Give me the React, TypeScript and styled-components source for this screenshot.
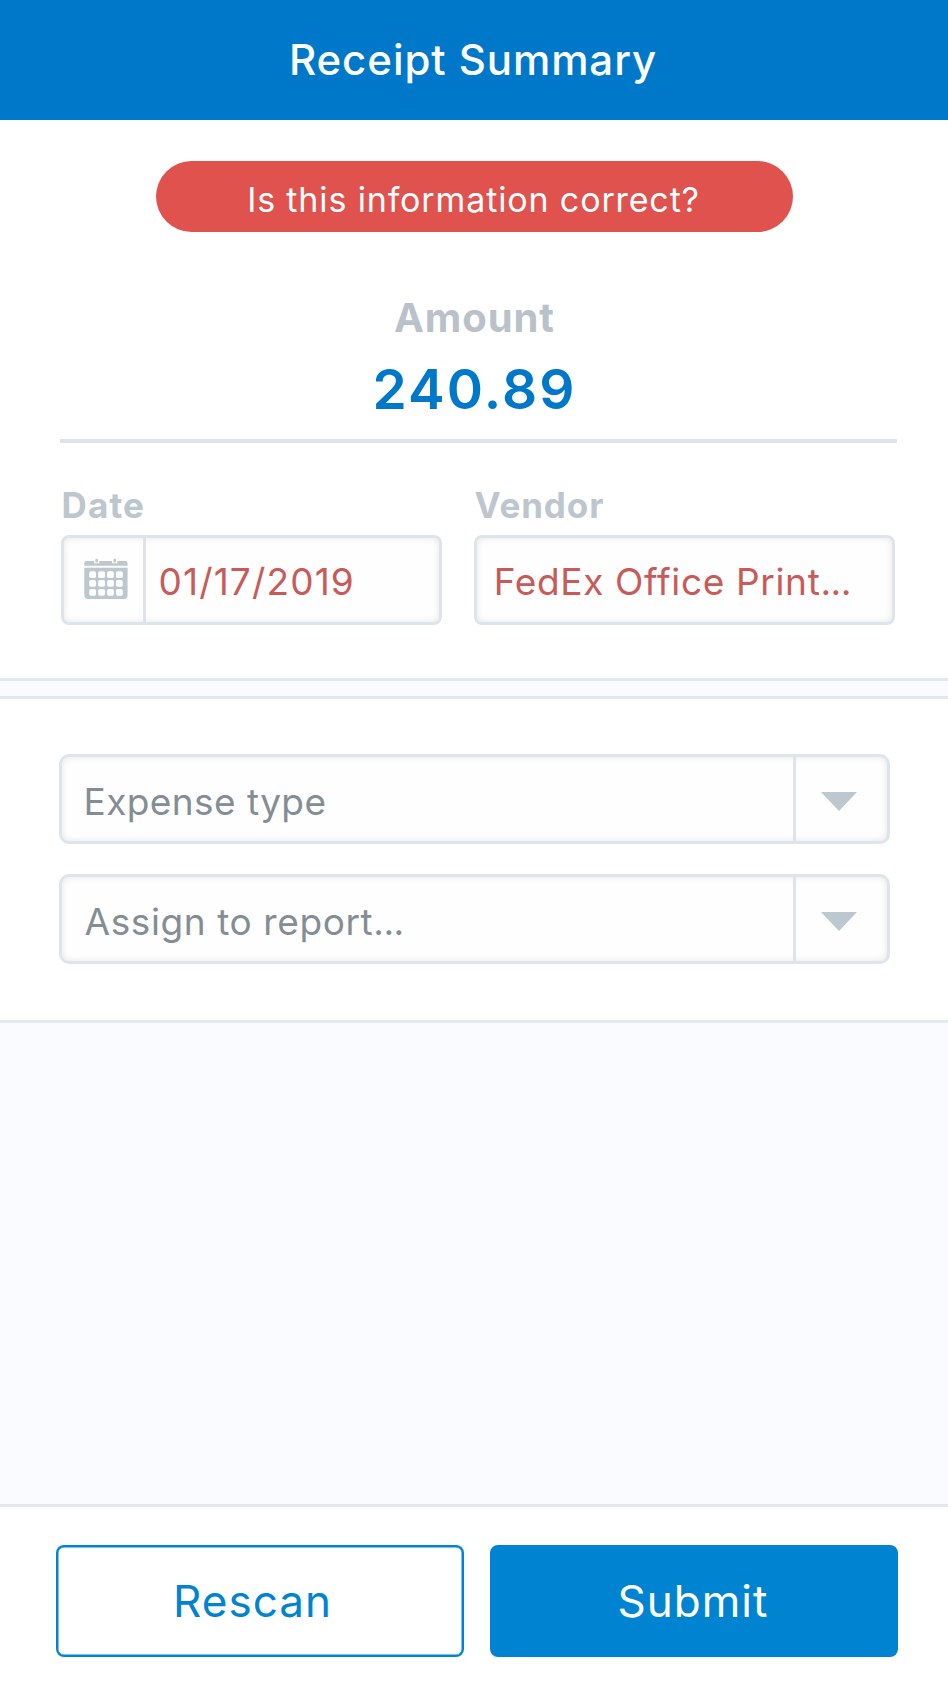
import React from "react";
import styled, { createGlobalStyle } from "styled-components";

const GlobalStyle = createGlobalStyle`
  *, *::before, *::after { box-sizing: border-box; }
  body { margin: 0; background: #fafbff; }
  button { font: inherit; cursor: pointer; }
`;

const Screen = styled.div`
  display: flex;
  flex-direction: column;
  height: 1692px;
  font-family: Inter, "Liberation Sans", sans-serif;
  background: #fafbff;
`;

const Header = styled.header`
  flex: none;
  height: 120px;
  padding: 34px 2px 0 0;
  background: #0078c9;
  color: #fff;
  text-align: center;
`;

const Title = styled.h1`
  margin: 0;
  font-size: 42px;
  line-height: 51px;
  font-weight: 500;
  letter-spacing: 0.93px;
`;

const Summary = styled.section`
  display: flex;
  flex-direction: column;
  flex: none;
  height: 561px;
  padding: 41px 51px 0 60px;
  background: #fff;
  border-bottom: 3px solid #e3e8ec;
`;

const Question = styled.div`
  width: 637px;
  height: 71px;
  margin-left: 96px;
  padding: 18px 2px 0 0;
  border-radius: 36px;
  background: #e0524e;
  color: #fff;
  font-size: 34px;
  line-height: 41px;
  letter-spacing: 0.86px;
  text-align: center;
`;

const Amount = styled.div`
  display: flex;
  flex-direction: column;
  align-items: center;
  height: 211px;
  padding: 61px 8px 0 0;
  border-bottom: 4px solid #dfe4ea;
`;

const AmountLabel = styled.span`
  font-size: 40px;
  line-height: 49px;
  font-weight: 700;
  letter-spacing: 0.9px;
  color: #b9c2ca;
`;

const AmountValue = styled.span`
  margin-top: 14px;
  font-size: 55px;
  line-height: 66px;
  font-weight: 600;
  letter-spacing: 2.15px;
  color: #0078c9;
`;

const Fields = styled.div`
  display: grid;
  grid-template-columns: 381px 421px;
  gap: 32px;
  margin: 41px 0 0 1px;
`;

const Label = styled.div<{ $spacing: number }>`
  margin-bottom: 9px;
  padding-left: 0.5px;
  font-size: 35px;
  line-height: 42px;
  font-weight: 700;
  letter-spacing: ${(p) => p.$spacing}px;
  color: #bcc6ce;
`;

const Box = styled.div<{ $radius: number }>`
  display: flex;
  height: 90px;
  border: 3px solid #dfe4ea;
  border-radius: ${(p) => p.$radius}px;
  background: #fefefe;
  box-shadow: inset 0 0 7px rgba(0, 0, 0, 0.1);
`;

const IconCell = styled.div`
  width: 82px;
  padding: 20px 0 0 20px;
  border-right: 3px solid #dfe4ea;
`;

const Value = styled.div<{ $inset: number; $spacing: number }>`
  flex: 1;
  padding: 21px 0 0 ${(p) => p.$inset}px;
  font-size: 37px;
  line-height: 45px;
  letter-spacing: ${(p) => p.$spacing}px;
  color: #c85a58;
  white-space: nowrap;
`;

const Placeholder = styled(Value)`
  padding-top: 22px;
  color: #838d95;
`;

const Dots = styled.span`
  letter-spacing: -0.5px;
`;

const Details = styled.section`
  display: flex;
  flex-direction: column;
  flex: none;
  gap: 30px;
  height: 327px;
  margin-top: 15px;
  padding: 55px 58px 0 59px;
  background: #fff;
  border-top: 3px solid #e3e8ec;
  border-bottom: 3px solid #e3e8ec;
`;

const ArrowCell = styled.div`
  width: 94px;
  padding: 35px 0 0 25px;
  border-left: 3px solid #dfe4ea;
`;

const Footer = styled.footer`
  display: flex;
  gap: 26px;
  flex: none;
  height: 188px;
  margin-top: auto;
  padding: 38px 50px 0 56px;
  background: #fff;
  border-top: 3px solid #e3e8ec;
`;

const Button = styled.button<{ $primary?: boolean }>`
  width: 408px;
  height: 112px;
  padding: 0 ${(p) => (p.$primary ? 2 : 15)}px 0 0;
  border: 2px solid #0084d1;
  border-radius: 8px;
  box-shadow: inset 0 0 0 0.5px #0084d1;
  background: ${(p) => (p.$primary ? "#0084d1" : "#fff")};
  color: ${(p) => (p.$primary ? "#fff" : "#0084d1")};
  font-size: 44px;
  line-height: 54px;
  letter-spacing: 1px;
`;

const CalendarIcon = () => (
  <svg width="44" height="42" viewBox="0 0 44 42" fill="#bdc7cf" display="block">
    <path d="M0.3 7.8V5.4Q0.3 3 2.7 3H41.2Q43.6 3 43.6 5.4V7.8Z" />
    {[12.7, 30.7].map((x) => (
      <g key={x}>
        <rect x={x - 2.6} y="0" width="5.2" height="5.3" fill="#fefefe" />
        <rect x={x - 1.2} y="0.8" width="2.4" height="3.6" />
      </g>
    ))}
    <path d="M0.3 9.8H43.6V37Q43.6 41 39.6 41H4.3Q0.3 41 0.3 37Z" />
    {[16.6, 25.4, 34.3].map((y) =>
      [8.6, 17.6, 26.5, 35.4].map((x) => (
        <rect key={`${x}-${y}`} x={x - 3.4} y={y - 3.4} width="6.8" height="6.8" rx="1.8" fill="#fff" />
      ))
    )}
  </svg>
);

const DownArrow = () => (
  <svg width="36" height="19" viewBox="0 0 36 19" display="block">
    <path d="M0 0H36L18 19Z" fill="#bdc7cf" />
  </svg>
);

type SelectProps = { children: React.ReactNode; inset: number; spacing: number };

const Select = ({ children, inset, spacing }: SelectProps) => (
  <Box $radius={10}>
    <Placeholder $inset={inset} $spacing={spacing}>{children}</Placeholder>
    <ArrowCell>
      <DownArrow />
    </ArrowCell>
  </Box>
);

export default function App() {
  return (
    <Screen>
      <GlobalStyle />
      <Header>
        <Title>Receipt Summary</Title>
      </Header>
      <Summary>
        <Question>Is this information correct?</Question>
        <Amount>
          <AmountLabel>Amount</AmountLabel>
          <AmountValue>240.89</AmountValue>
        </Amount>
        <Fields>
          <div>
            <Label $spacing={1.14}>Date</Label>
            <Box $radius={8}>
              <IconCell>
                <CalendarIcon />
              </IconCell>
              <Value $inset={12.5} $spacing={1.15}>01/17/2019</Value>
            </Box>
          </div>
          <div>
            <Label $spacing={0.9}>Vendor</Label>
            <Box $radius={8}>
              <Value $inset={16.7} $spacing={0.66}>FedEx Office Print<Dots>...</Dots></Value>
            </Box>
          </div>
        </Fields>
      </Summary>
      <Details>
        <Select inset={21.5} spacing={0.42}>Expense type</Select>
        <Select inset={22.5} spacing={0.6}>Assign to report<Dots>...</Dots></Select>
      </Details>
      <Footer>
        <Button>Rescan</Button>
        <Button $primary>Submit</Button>
      </Footer>
    </Screen>
  );
}
